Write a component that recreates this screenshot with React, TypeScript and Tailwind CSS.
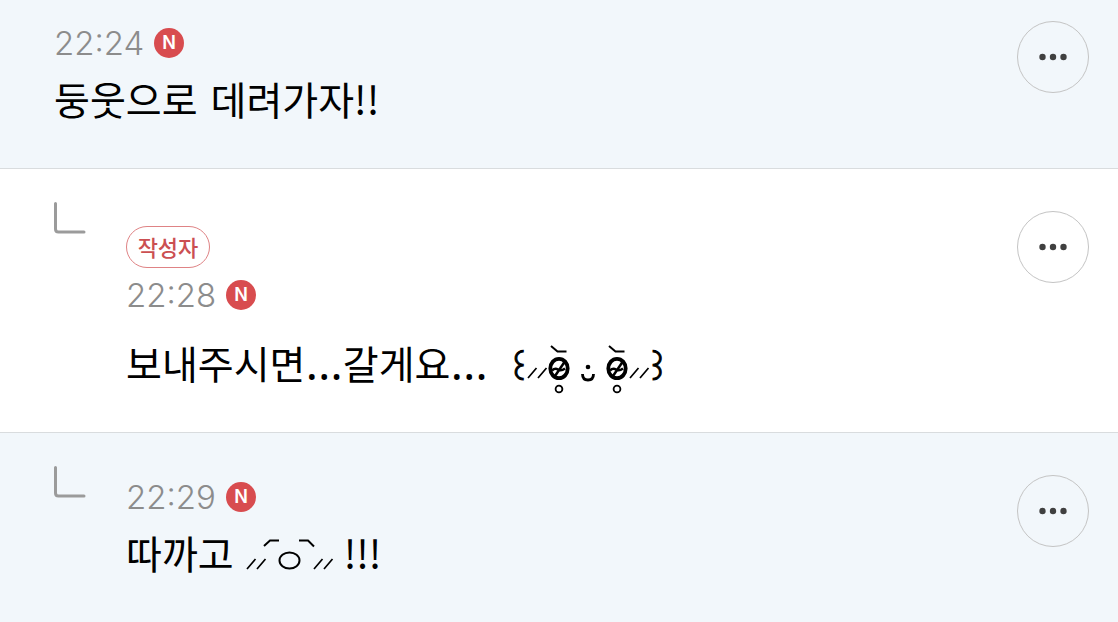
import type { ReactNode } from "react"

function NewBadge() {
  return (
    <svg className="size-[30px]" viewBox="0 0 30 30" role="img" aria-label="새 댓글">
      <circle cx="15" cy="15" r="15" fill="#d84c4f" />
      <text x="15" y="21" textAnchor="middle" fill="#fff" className="font-['Inter',sans-serif] text-[18px] font-semibold">
        N
      </text>
    </svg>
  )
}

function ReplyMark() {
  return (
    <svg className="size-8 shrink-0" viewBox="0 0 32 32" fill="none" stroke="#9b9b9b" strokeWidth="3" strokeLinecap="round">
      <path d="M1.5 1.5V27Q1.5 30 4.5 30H30" />
    </svg>
  )
}

function MoreButton() {
  return (
    <button type="button" aria-label="더보기" className="flex size-[72px] shrink-0 items-center justify-center rounded-full border border-[#c4c4c4]">
      <svg className="h-2 w-7" viewBox="0 0 28 8" fill="#404040">
        <circle cx="3.5" cy="4" r="3.2" />
        <circle cx="14" cy="4" r="3.2" />
        <circle cx="24.5" cy="4" r="3.2" />
      </svg>
    </button>
  )
}

function Blush({ x, y }: { x: number; y: number }) {
  return <path d={`M${x} ${y}l8.5 -10M${x + 10} ${y}l8.5 -10`} fill="none" stroke="#000" strokeWidth="1.7" />
}

function ShyEye({ x }: { x: number }) {
  return (
    <g fill="none" stroke="#000">
      <path d={`M${x - 8} 12l6.5 5.5h9`} strokeWidth="2" />
      <ellipse cx={x} cy="34.5" rx="8.7" ry="9.7" strokeWidth="3.8" />
      <path d={`M${x - 4} 42l9.5 -14`} strokeWidth="2.5" />
      <path d={`M${x - 7} 36.5q3 -3 6 -1t7 -1`} strokeWidth="2.5" />
      <circle cx={x} cy="55" r="3.4" strokeWidth="1.8" />
    </g>
  )
}

function ShyFace() {
  return (
    <svg className="ml-3.5 h-16 w-[180px] shrink-0" viewBox="-8 -4 180 64" role="img" aria-label="수줍은 얼굴">
      <text x="-4" y="46" className="text-[34px]" stroke="#000" strokeWidth="1">꒰</text>
      <Blush x={18} y={44} />
      <ShyEye x={49} />
      <circle cx="78" cy="33" r="2.3" />
      <path d="M72.5 40q0 6 5.5 6t5.5 -6" fill="none" stroke="#000" strokeWidth="2.8" />
      <ShyEye x={107} />
      <Blush x={120} y={44} />
      <text x="134" y="46" className="text-[34px]" stroke="#000" strokeWidth="1">꒱</text>
    </svg>
  )
}

function SmugFace() {
  return (
    <svg className="mr-2 ml-2.5 h-[60px] w-[92px] shrink-0" viewBox="0 0 92 60" role="img" aria-label="뿌듯한 얼굴">
      <Blush x={3} y={47} />
      <g fill="none" stroke="#000" strokeWidth="2">
        <path d="M20 24l6 -5.5h9M55 18.5h9l6 6" />
        <ellipse cx="45.5" cy="38.5" rx="10" ry="8" />
      </g>
      <Blush x={70} y={47} />
    </svg>
  )
}

function Dots() {
  return <span className="font-['Open_Sans',sans-serif] text-[48px]">…</span>
}

interface CommentProps {
  time: string
  reply?: boolean
  author?: boolean
  className: string
  children: ReactNode
}

function Comment({ time, reply, author, className, children }: CommentProps) {
  return (
    <li className={`flex items-start pr-[29px] pl-[54px] ${className}`}>
      {reply && (
        <div className="-mt-[9px] mr-10">
          <ReplyMark />
        </div>
      )}
      <div className={`min-w-0 flex-1 ${author ? "pt-[15px]" : "pt-0.5"}`}>
        {author && (
          <span className="mb-[7px] flex h-[42px] w-[84px] items-center justify-center rounded-full border border-[#df8385] pb-0.5 text-[22px] font-medium text-[#cb4f52]">
            작성자
          </span>
        )}
        <div className="flex h-10 items-center gap-2.5">
          <time className="pt-0.5 font-['Inter',sans-serif] text-[33px] font-light text-[#8c8c8c]">{time}</time>
          <NewBadge />
        </div>
        <p className={`flex items-center text-[39px] leading-[60px] ${author ? "mt-[15px]" : "mt-[5px]"}`}>{children}</p>
      </div>
      <MoreButton />
    </li>
  )
}

export default function App() {
  return (
    <ul className="min-h-screen bg-[#f2f7fb] font-['Noto_Sans_CJK_KR',sans-serif] text-black">
      <Comment time="22:24" className="border-b border-[#d9dcde] pt-[21px] pb-10">
        둥웃으로{"\u2004"}데려가자!!
      </Comment>
      <Comment time="22:28" reply author className="border-b border-[#d9dcde] bg-white pt-[42px] pb-[38px]">
        보내주시면
        <Dots />
        갈게요
        <Dots />
        <ShyFace />
      </Comment>
      <Comment time="22:29" reply className="pt-[42px] pb-9">
        따까고
        <SmugFace />
        !!!
      </Comment>
    </ul>
  )
}
